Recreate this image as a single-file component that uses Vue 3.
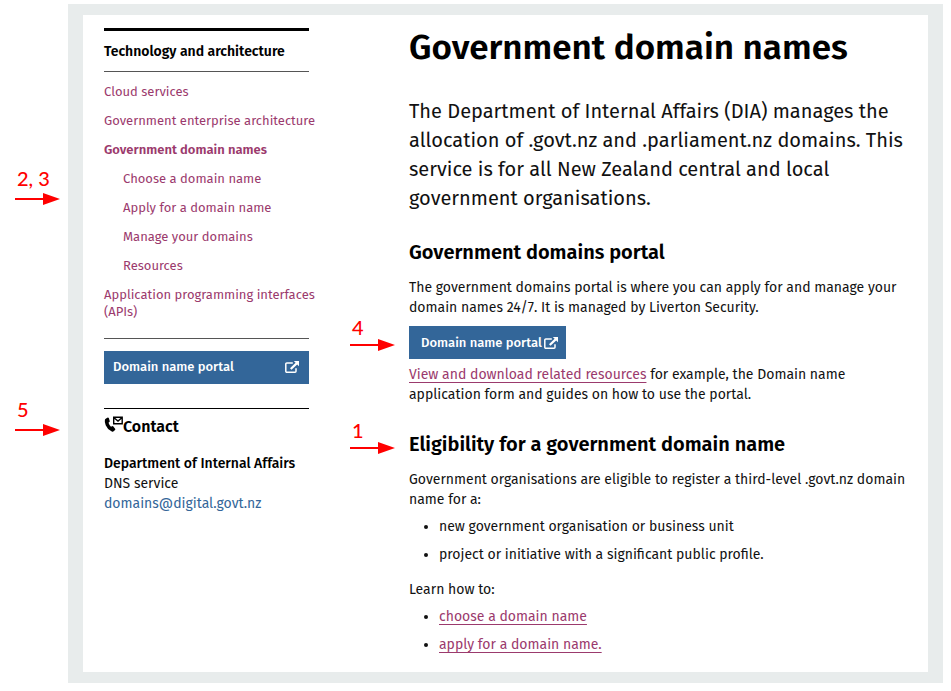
<script setup>
const subPages = ['Choose a domain name', 'Apply for a domain name', 'Manage your domains', 'Resources']

const callouts = [
  { label: '2, 3', x: 15, y: 164 },
  { label: '5', x: 15, y: 395 },
  { label: '4', x: 350, y: 315, tight: true },
  { label: '1', x: 350, y: 418, tight: true },
]
</script>

<template>
  <div class="page">
    <div class="sheet">
      <aside class="sidebar">
        <nav class="section-nav" aria-labelledby="section-title">
          <h2 id="section-title" class="section-title">Technology and architecture</h2>
          <ul class="nav-list">
            <li><a href="#cloud">Cloud services</a></li>
            <li><a href="#architecture">Government enterprise architecture</a></li>
            <li>
              <a href="#domains" class="current">Government domain names</a>
              <ul class="nav-list nested">
                <li v-for="name in subPages" :key="name"><a href="#sub">{{ name }}</a></li>
              </ul>
            </li>
            <li><a href="#apis">Application programming interfaces (APIs)</a></li>
          </ul>
        </nav>

        <a class="portal wide" href="#portal">
          <span>Domain name portal</span>
          <svg class="external" viewBox="0 0 14 12" aria-hidden="true">
            <path d="M7.800 1.900H1.800A1 1 0 0 0 .8 2.900V10.200A1 1 0 0 0 1.800 11.200H10A1 1 0 0 0 11 10.200V7.200" fill="none" stroke="currentColor" stroke-width="1.500" />
            <path d="M8.800 0H14V5.200L12.200 3.500L6.500 8.700L5 7.200L10.600 1.800Z" fill="currentColor" />
          </svg>
        </a>

        <section class="contact">
          <h2 class="contact-title">
            <svg class="contact-icon" viewBox="0 0 19 16" aria-hidden="true">
              <path d="M1.700 2.700L3.300 1.700Q4.400 1.200 4.900 2.200L5.700 4.900Q5.900 5.700 5.300 6.100L4.500 6.700Q5.200 9 7 10.700L8 10.200Q8.900 9.900 9.400 10.600L11.100 12.700Q11.700 13.500 11 14.100L9.700 15.300Q8.900 16 7.800 15.500Q3.500 13.600 1.700 9.200Q.4 5.700 .9 3.700Q1.100 3.100 1.700 2.700Z" fill="currentColor" />
              <path d="M9.700 1.300H18.200V7.700H9.700ZM10.300 2L14 5L17.600 2" fill="none" stroke="currentColor" stroke-width="1.400" />
            </svg>
            <span>Contact</span>
          </h2>
          <address class="address">
            <strong>Department of Internal Affairs</strong>
            <span>DNS service</span>
            <a href="mailto:domains@digital.govt.nz">domains@digital.govt.nz</a>
          </address>
        </section>
      </aside>

      <main class="content">
        <h1>Government domain names</h1>
        <p class="lead">The Department of Internal Affairs (DIA) manages the allocation of .govt.nz and .parliament.nz domains. This service is for all New Zealand central and local government organisations.</p>

        <h2>Government domains portal</h2>
        <p>The government domains portal is where you can apply for and manage your domain names 24/7. It is managed by Liverton Security.</p>
        <a class="portal" href="#portal">
          <span>Domain name portal</span>
          <svg class="external" viewBox="0 0 14 12" aria-hidden="true">
            <path d="M7.800 1.900H1.800A1 1 0 0 0 .8 2.900V10.200A1 1 0 0 0 1.800 11.200H10A1 1 0 0 0 11 10.200V7.200" fill="none" stroke="currentColor" stroke-width="1.500" />
            <path d="M8.800 0H14V5.200L12.200 3.500L6.500 8.700L5 7.200L10.600 1.800Z" fill="currentColor" />
          </svg>
        </a>
        <p><a class="link" href="#resources">View and download related resources</a> for example, the Domain name application form and guides on how to use the portal.</p>

        <h2>Eligibility for a government domain name</h2>
        <p>Government organisations are eligible to register a third-level .govt.nz domain name for a:</p>
        <ul class="bullets">
          <li>new government organisation or business unit</li>
          <li>project or initiative with a significant public profile.</li>
        </ul>
        <p class="learn">Learn how to:</p>
        <ul class="bullets">
          <li><a class="link" href="#choose">choose a domain name</a></li>
          <li><a class="link" href="#apply">apply for a domain name.</a></li>
        </ul>
      </main>
    </div>

    <div
      v-for="note in callouts"
      :key="note.label"
      class="callout"
      :class="{ tight: note.tight }"
      :style="{ left: note.x + 'px', top: note.y + 'px' }"
    >
      <span>{{ note.label }}</span>
      <svg viewBox="0 0 46 12" aria-hidden="true">
        <path d="M0 5H28V0L45 6L28 12V7H0Z" fill="currentColor" />
      </svg>
    </div>
  </div>
</template>

<style>
body {
  margin: 0;
  background: #fff;
}
</style>

<style scoped>
.page {
  position: relative;
  padding: 4px 8px 8px 68px;
  font-family: "Fira Sans", "Noto Sans", sans-serif;
  font-size: 14px;
  line-height: 20px;
  color: #111;
}

.sheet {
  display: flex;
  gap: 100px;
  padding: 13px 12px 17px 21px;
  border: solid #e8ecec;
  border-width: 11px 15px;
  background: #fff;
}

h1,
h2,
p,
ul {
  margin: 0;
  padding: 0;
}

h1,
h2 {
  color: #000;
  font-weight: 600;
}

a {
  color: #9b3a6d;
  text-decoration: none;
}

.sidebar {
  flex: 0 0 205px;
}

.section-nav {
  border-top: 3px solid #000;
  border-bottom: 1px solid #555;
  padding-bottom: 18px;
}

.section-title {
  padding: 11px 0 9px;
  border-bottom: 1px solid #555;
  font-size: 14px;
  line-height: 20px;
}

.nav-list {
  display: flex;
  flex-direction: column;
  gap: 12px;
  margin-right: -12px;
  padding-top: 12px;
  list-style: none;
  font-size: 13px;
  line-height: 17px;
}

.section-title + .nav-list {
  padding-top: 11px;
}

.nav-list a {
  display: block;
}

.nested {
  padding-left: 19px;
}

.nav-list .current {
  font-weight: 600;
}

.portal {
  display: inline-flex;
  align-items: center;
  gap: 2px;
  box-sizing: border-box;
  height: 33px;
  padding: 0 8px 0 12px;
  background: #336699;
  color: #fff;
  font-size: 13px;
  font-weight: 500;
}

.portal.wide {
  display: flex;
  justify-content: space-between;
  margin-top: 12px;
  padding: 0 10px 2px 9px;
}

.external {
  width: 14px;
  height: 12px;
}

.contact {
  margin-top: 24px;
  border-top: 1px solid #000;
  padding-top: 7px;
}

.contact-title {
  display: flex;
  font-size: 16px;
  line-height: 22px;
}

.contact-icon {
  width: 19px;
  height: 16px;
}

.address {
  display: flex;
  flex-direction: column;
  margin-top: 16px;
  font-style: normal;
}

.address strong {
  font-weight: 500;
  color: #000;
}

.address a {
  color: #336699;
}

.content {
  flex: 1;
  min-width: 0;
}

h1 {
  font-size: 35px;
  line-height: 38px;
}

.lead {
  margin-top: 31px;
  font-size: 20px;
  line-height: 29px;
}

.content h2 {
  margin: 25px 0 12px;
  font-size: 20px;
  line-height: 28px;
}

.content .portal {
  margin: 8px 0 6px;
  vertical-align: top;
}

.link {
  text-decoration: underline 1px;
  text-decoration-skip-ink: none;
  text-underline-offset: 3px;
}

.bullets {
  display: flex;
  flex-direction: column;
  gap: 8px;
  margin-top: 7px;
  padding-left: 30px;
}

.learn {
  margin-top: 15px;
}

.callout {
  position: absolute;
  color: #f00;
  font-family: Lato, sans-serif;
  font-size: 20px;
  font-weight: 500;
  line-height: 29px;
}

.callout.tight {
  line-height: 24px;
}

.callout span {
  display: block;
  padding-left: 2px;
}

.callout svg {
  display: block;
  width: 46px;
  height: 12px;
}
</style>
